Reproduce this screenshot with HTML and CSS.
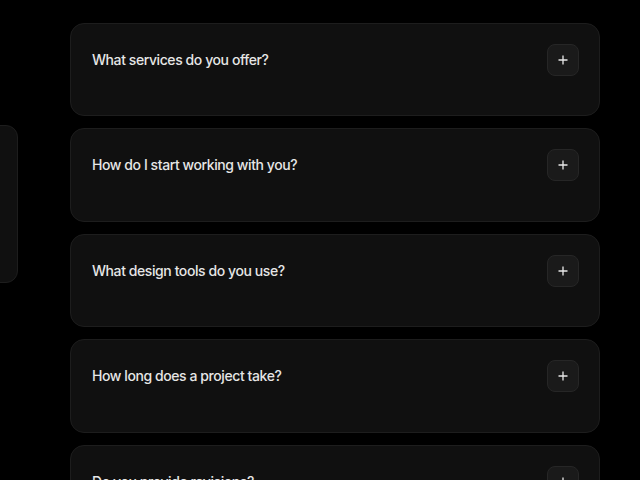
FILE: index.html
```html
<!DOCTYPE html>
<html lang="en">
<head>
<meta charset="utf-8">
<title>FAQ</title>
<link rel="stylesheet" href="styles.css">
</head>
<body>
<div class="page">
  <aside class="side-panel"></aside>
  <main class="faq">
    <div class="faq-item">
      <div class="faq-head">
        <h3 class="faq-q">What services do you offer?</h3>
        <button class="faq-toggle" aria-label="Expand"><svg width="10" height="10" viewBox="0 0 10 10"><path d="M5 0.5v9M0.5 5h9" stroke="#e8e8e8" stroke-width="1.3"/></svg></button>
      </div>
    </div>
    <div class="faq-item">
      <div class="faq-head">
        <h3 class="faq-q">How do I start working with you?</h3>
        <button class="faq-toggle" aria-label="Expand"><svg width="10" height="10" viewBox="0 0 10 10"><path d="M5 0.5v9M0.5 5h9" stroke="#e8e8e8" stroke-width="1.3"/></svg></button>
      </div>
    </div>
    <div class="faq-item">
      <div class="faq-head">
        <h3 class="faq-q">What design tools do you use?</h3>
        <button class="faq-toggle" aria-label="Expand"><svg width="10" height="10" viewBox="0 0 10 10"><path d="M5 0.5v9M0.5 5h9" stroke="#e8e8e8" stroke-width="1.3"/></svg></button>
      </div>
    </div>
    <div class="faq-item">
      <div class="faq-head">
        <h3 class="faq-q">How long does a project take?</h3>
        <button class="faq-toggle" aria-label="Expand"><svg width="10" height="10" viewBox="0 0 10 10"><path d="M5 0.5v9M0.5 5h9" stroke="#e8e8e8" stroke-width="1.3"/></svg></button>
      </div>
    </div>
    <div class="faq-item">
      <div class="faq-head">
        <h3 class="faq-q">Do you provide revisions?</h3>
        <button class="faq-toggle" aria-label="Expand"><svg width="10" height="10" viewBox="0 0 10 10"><path d="M5 0.5v9M0.5 5h9" stroke="#e8e8e8" stroke-width="1.3"/></svg></button>
      </div>
    </div>
  </main>
</div>
</body>
</html>
```

FILE: styles.css
```css
html, body {
  margin: 0;
  padding: 0;
  background: #000;
  height: 100%;
  overflow: hidden;
}
body {
  font-family: Inter, "Noto Sans", "Liberation Sans", sans-serif;
  color: #e6e6e6;
}
.page {
  display: flex;
  align-items: flex-start;
  gap: 52px;
  padding-top: 23px;
}
.side-panel {
  flex: 0 0 200px;
  margin-left: -182px;
  margin-top: 102px;
  height: 158px;
  box-sizing: border-box;
  background: #101010;
  border: 1px solid #1d1d1d;
  border-radius: 12px;
}
.faq {
  flex: 0 0 530px;
  display: flex;
  flex-direction: column;
  gap: 12px;
}
.faq-item {
  box-sizing: border-box;
  height: 93.4px;
  background: #101010;
  border: 1px solid #1d1d1d;
  border-radius: 14px;
  padding: 20px 20px 40px 21px;
}
.faq-head {
  display: flex;
  align-items: center;
  justify-content: space-between;
  height: 32px;
}
.faq-q {
  margin: 0;
  font-size: 14px;
  font-weight: 500;
  line-height: 20px;
  letter-spacing: -0.42px;
  color: #e6e6e6;
}
.faq-toggle {
  width: 32px;
  height: 32px;
  padding: 0;
  display: flex;
  align-items: center;
  justify-content: center;
  background: #1a1a1a;
  border: 1px solid #262626;
  border-radius: 8px;
  cursor: pointer;
}
.faq-toggle svg {
  display: block;
}
```
